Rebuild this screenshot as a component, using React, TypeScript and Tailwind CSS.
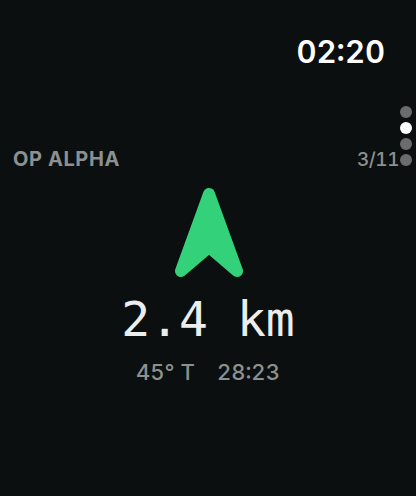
export default function App() {
  return (
    <div
      className="relative w-[416px] h-[496px] overflow-hidden bg-[#0b0f0f] flex flex-col"
      style={{ fontFamily: 'Inter, "Noto Sans", sans-serif' }}
    >
      {/* Clock */}
      <div className="flex justify-end pr-[31px] pt-[36px]">
        <span className="text-[31px] leading-none font-semibold text-white tabular-nums">02:20</span>
      </div>

      {/* Op name + step */}
      <div className="flex items-center justify-between pl-[13px] pr-[17px] mt-[82px]">
        <span className="text-[20px] leading-none font-bold tracking-[0.6px] text-[#8c918f]">OP ALPHA</span>
        <span className="text-[19px] leading-none font-medium tracking-[-0.5px] text-[#8c918f] tabular-nums">3/11</span>
      </div>

      {/* Heading arrow */}
      <div className="flex justify-center mt-[18px]">
        <svg width="70" height="92" viewBox="0 0 70 92" className="ml-[1px]">
          <polygon
            points="35,7 7,84 35,60 63,84"
            fill="#33d17a"
            stroke="#33d17a"
            strokeWidth="12"
            strokeLinejoin="round"
          />
        </svg>
      </div>

      {/* Distance */}
      <div className="flex justify-center mt-[16px]">
        <span
          className="text-[48px] leading-none text-[#eceeed]"
          style={{ fontFamily: '"DejaVu Sans Mono", monospace' }}
        >
          2.4 km
        </span>
      </div>

      {/* Bearing + ETA */}
      <div className="flex justify-center gap-[22px] mt-[18px] text-[22px] leading-none font-medium text-[#8c918f] tabular-nums">
        <span>45° T</span>
        <span>28:23</span>
      </div>

      {/* Page dots */}
      <div className="absolute right-[4px] top-[106px] flex flex-col gap-[4px]">
        <span className="w-[12px] h-[12px] rounded-full bg-[#6b6d6c]" />
        <span className="w-[12px] h-[12px] rounded-full bg-white" />
        <span className="w-[12px] h-[12px] rounded-full bg-[#6b6d6c]" />
        <span className="w-[12px] h-[12px] rounded-full bg-[#6b6d6c]" />
      </div>
    </div>
  );
}
